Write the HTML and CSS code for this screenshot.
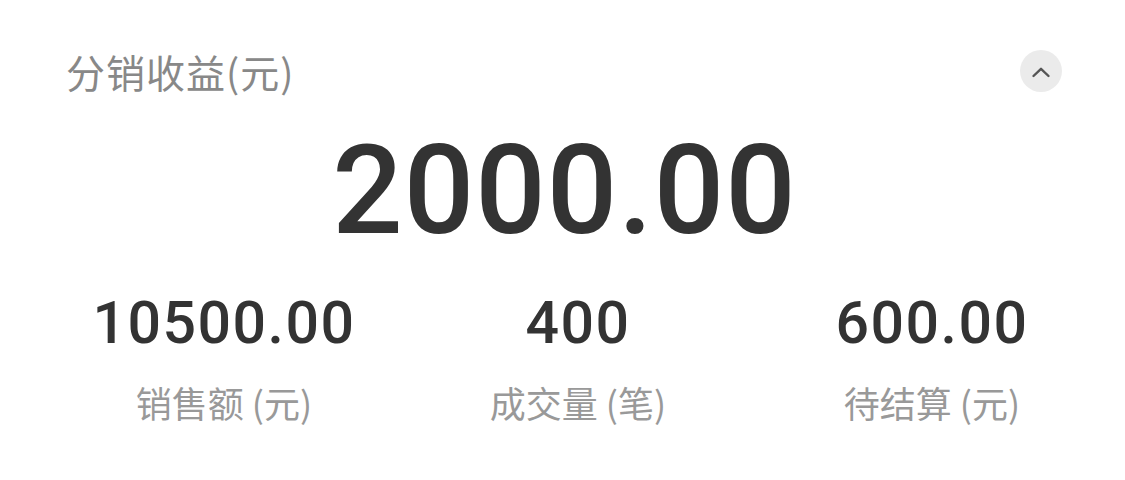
FILE: index.html
```html
<!DOCTYPE html>
<html lang="zh-CN">
<head>
<meta charset="utf-8">
<title>分销收益</title>
<link rel="stylesheet" href="styles.css">
</head>
<body>
<div class="card">
  <div class="card-header">
    <div class="card-title">分销收益(元)</div>
    <button class="toggle" type="button" aria-label="收起">
      <svg viewBox="0 0 42 42" width="42" height="42"><polyline points="13.5,26 21,18.8 28.5,26" fill="none" stroke="#555" stroke-width="2.4" stroke-linecap="round" stroke-linejoin="round"/></svg>
    </button>
  </div>
  <div class="total">2000.00</div>
  <div class="stats">
    <div class="stat">
      <div class="stat-value">10500.00</div>
      <div class="stat-label">销售额 (元)</div>
    </div>
    <div class="stat">
      <div class="stat-value">400</div>
      <div class="stat-label">成交量 (笔)</div>
    </div>
    <div class="stat">
      <div class="stat-value">600.00</div>
      <div class="stat-label">待结算 (元)</div>
    </div>
  </div>
</div>
</body>
</html>
```

FILE: styles.css
```css
* { box-sizing: border-box; }
html, body {
  margin: 0;
  padding: 0;
  background: #ffffff;
}
body {
  font-family: "Noto Sans CJK SC", "Liberation Sans", sans-serif;
  color: #333333;
}
.card {
  width: 1125px;
  height: 480px;
  padding: 50px 63px 0 66px;
}
.card-header {
  display: flex;
  align-items: center;
  justify-content: space-between;
  height: 42px;
}
.card-title {
  font-family: "Noto Sans CJK SC", sans-serif;
  font-size: 39px;
  line-height: 1;
  letter-spacing: 1px;
  color: #888888;
}
.toggle {
  width: 42px;
  height: 42px;
  padding: 0;
  border: none;
  border-radius: 50%;
  background: #ebebeb;
  display: flex;
  align-items: center;
  justify-content: center;
}
.toggle svg { display: block; }
.total {
  margin-top: 37px;
  margin-left: -62px;
  margin-right: -63px;
  text-align: center;
  font-family: Roboto, "Liberation Sans", sans-serif;
  font-weight: 500;
  font-size: 124px;
  line-height: 1;
  letter-spacing: 1px;
  color: #333333;
}
.stats {
  margin-top: 40px;
  margin-left: -19px;
  margin-right: -47px;
  display: grid;
  grid-template-columns: repeat(3, 1fr);
}
.stat {
  display: flex;
  flex-direction: column;
  align-items: center;
  gap: 32px;
}
.stat-value {
  font-family: Roboto, "Liberation Sans", sans-serif;
  font-weight: 500;
  font-size: 59px;
  line-height: 1;
  letter-spacing: 1.5px;
  color: #333333;
}
.stat-label {
  font-family: "Noto Sans CJK SC", sans-serif;
  font-size: 36px;
  line-height: 1;
  color: #999999;
}
```
